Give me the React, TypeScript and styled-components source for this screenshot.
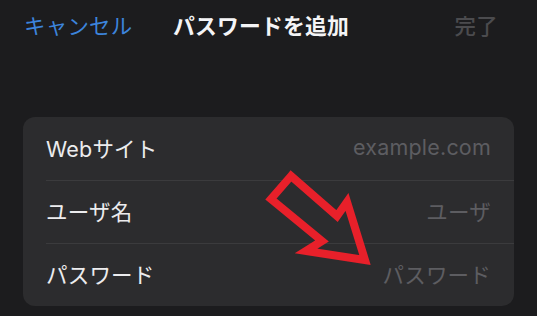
import React from 'react';
import styled, { createGlobalStyle } from 'styled-components';

const GlobalStyle = createGlobalStyle`
  html, body {
    margin: 0;
    padding: 0;
    background: #1c1c1e;
  }
  body {
    font-family: "Inter", "Noto Sans CJK JP", sans-serif;
    -webkit-font-smoothing: antialiased;
  }
`;

const Screen = styled.div`
  width: 537px;
  height: 316px;
  background: #1c1c1e;
  overflow: hidden;
  position: relative;
`;

const NavBar = styled.header`
  height: 54px;
  display: grid;
  grid-template-columns: 1fr auto 1fr;
  align-items: center;
  padding: 0 39px 0 24px;
  font-size: 21.4px;
  line-height: 1;
`;

const NavButton = styled.span<{ $align: 'left' | 'right'; $muted?: boolean }>`
  justify-self: ${p => (p.$align === 'left' ? 'start' : 'end')};
  color: ${p => (p.$muted ? '#4b4b4e' : '#3c84dc')};
  font-weight: ${p => (p.$muted ? 500 : 400)};
  letter-spacing: 0.3px;
`;

const NavTitle = styled.h1`
  margin: 0;
  font-size: 21.8px;
  font-weight: 700;
  color: #f4f4f6;
  letter-spacing: 0.2px;
`;

const Form = styled.div`
  margin: 63px 23px 0;
  background: #2c2c2e;
  border-radius: 12px;
  overflow: hidden;
`;

const Row = styled.div`
  height: 63px;
  display: flex;
  align-items: center;
  justify-content: space-between;
  margin-left: 23px;
  padding: 0 23px 3px 0;
  font-size: 21.5px;
  box-sizing: border-box;

  & + & {
    border-top: 1px solid #3b3b3d;
  }
`;

const Label = styled.span`
  color: #ececee;
  letter-spacing: 0.2px;
`;

const Placeholder = styled.span`
  color: #5d5d61;
  letter-spacing: 0.2px;
`;

const Overlay = styled.svg`
  position: absolute;
  left: 0;
  top: 0;
  pointer-events: none;
`;

const fields = [
  { label: 'Webサイト', placeholder: 'example.com' },
  { label: 'ユーザ名', placeholder: 'ユーザ' },
  { label: 'パスワード', placeholder: 'パスワード' },
];

const App: React.FC = () => {
  return (
    <Screen>
      <GlobalStyle />
      <NavBar>
        <NavButton $align="left">キャンセル</NavButton>
        <NavTitle>パスワードを追加</NavTitle>
        <NavButton $align="right" $muted>完了</NavButton>
      </NavBar>

      <Form>
        {fields.map(f => (
          <Row key={f.label}>
            <Label>{f.label}</Label>
            <Placeholder>{f.placeholder}</Placeholder>
          </Row>
        ))}
      </Form>

      {/* annotation arrow drawn over the form */}
      <Overlay width="537" height="316" viewBox="0 0 537 316">
        <polygon
          points="291,176 271,199 322,241 306,251 365,260 347,202 337,216"
          fill="none"
          stroke="#e8202a"
          strokeWidth="8"
          strokeLinejoin="miter"
          strokeMiterlimit="10"
        />
      </Overlay>
    </Screen>
  );
};

export default App;
